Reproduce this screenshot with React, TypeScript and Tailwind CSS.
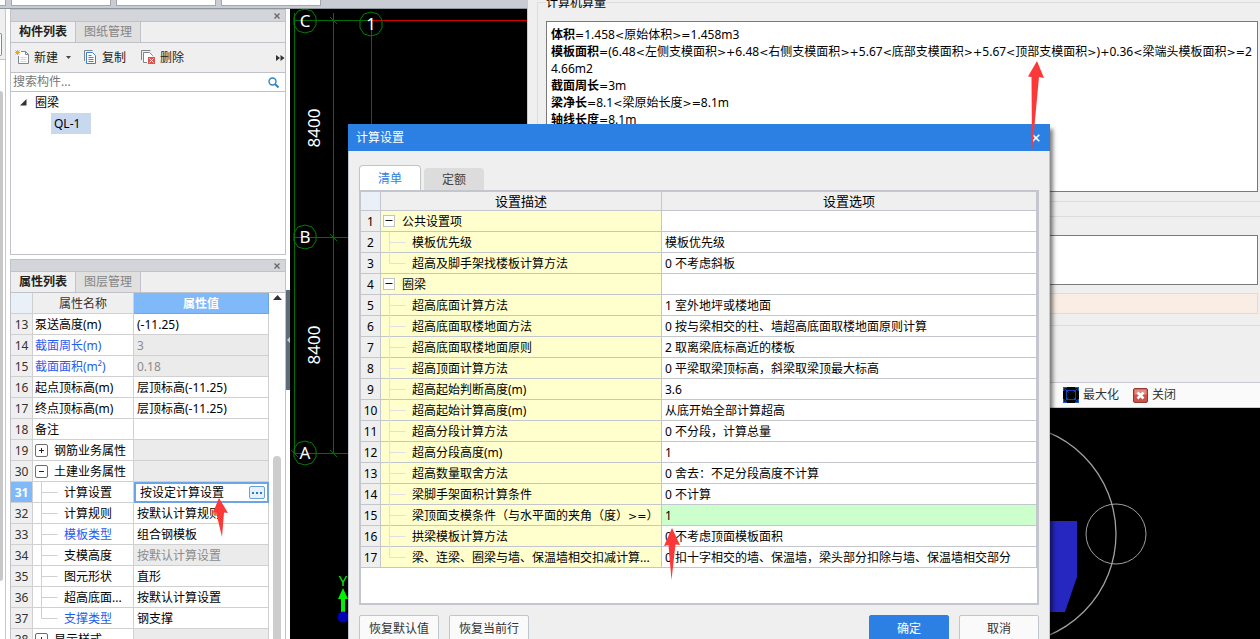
import { useState } from "react";
import type { ReactNode } from "react";
import { clsx } from "clsx";

interface PropertyRow {
  no: number;
  name: string;
  value?: string;
  kind?: "group" | "child";
  open?: boolean;
  blue?: boolean;
  muted?: boolean;
  last?: boolean;
}

const PROPERTIES: PropertyRow[] = [
  { no: 13, name: "泵送高度(m)", value: "(-11.25)" },
  { no: 14, name: "截面周长(m)", value: "3", blue: true, muted: true },
  { no: 15, name: "截面面积(m²)", value: "0.18", blue: true, muted: true },
  { no: 16, name: "起点顶标高(m)", value: "层顶标高(-11.25)" },
  { no: 17, name: "终点顶标高(m)", value: "层顶标高(-11.25)" },
  { no: 18, name: "备注", value: "" },
  { no: 19, name: "钢筋业务属性", kind: "group", muted: true },
  { no: 30, name: "土建业务属性", kind: "group", open: true, muted: true },
  { no: 31, name: "计算设置", value: "按设定计算设置", kind: "child" },
  { no: 32, name: "计算规则", value: "按默认计算规则", kind: "child" },
  { no: 33, name: "模板类型", value: "组合钢模板", kind: "child", blue: true },
  { no: 34, name: "支模高度", value: "按默认计算设置", kind: "child", muted: true },
  { no: 35, name: "图元形状", value: "直形", kind: "child" },
  { no: 36, name: "超高底面...", value: "按默认计算设置", kind: "child" },
  { no: 37, name: "支撑类型", value: "钢支撑", kind: "child", blue: true, last: true },
  { no: 38, name: "显示样式", kind: "group", muted: true },
];

interface SettingRow {
  name: string;
  value?: string;
  group?: boolean;
  last?: boolean;
}

const SETTINGS: SettingRow[] = [
  { name: "公共设置项", group: true },
  { name: "模板优先级", value: "模板优先级" },
  { name: "超高及脚手架找楼板计算方法", value: "0 不考虑斜板", last: true },
  { name: "圈梁", group: true },
  { name: "超高底面计算方法", value: "1 室外地坪或楼地面" },
  { name: "超高底面取楼地面方法", value: "0 按与梁相交的柱、墙超高底面取楼地面原则计算" },
  { name: "超高底面取楼地面原则", value: "2 取离梁底标高近的楼板" },
  { name: "超高顶面计算方法", value: "0 平梁取梁顶标高，斜梁取梁顶最大标高" },
  { name: "超高起始判断高度(m)", value: "3.6" },
  { name: "超高起始计算高度(m)", value: "从底开始全部计算超高" },
  { name: "超高分段计算方法", value: "0 不分段，计算总量" },
  { name: "超高分段高度(m)", value: "1" },
  { name: "超高数量取舍方法", value: "0 舍去：不足分段高度不计算" },
  { name: "梁脚手架面积计算条件", value: "0 不计算" },
  { name: "梁顶面支模条件（与水平面的夹角（度）>=）", value: "1" },
  { name: "拱梁模板计算方法", value: "0 不考虑顶面模板面积" },
  { name: "梁、连梁、圈梁与墙、保温墙相交扣减计算...", value: "0 扣十字相交的墙、保温墙，梁头部分扣除与墙、保温墙相交部分", last: true },
];

const RESULTS: [string, string][] = [
  ["体积", "=1.458<原始体积>=1.458m3"],
  ["模板面积", "=(6.48<左侧支模面积>+6.48<右侧支模面积>+5.67<底部支模面积>+5.67<顶部支模面积>)+0.36<梁端头模板面积>=2"],
  ["", "4.66m2"],
  ["截面周长", "=3m"],
  ["梁净长", "=8.1<梁原始长度>=8.1m"],
  ["轴线长度", "=8.1m"],
];

// operators are set in a wider face than the digits around them
function Formula({ text }: { text: string }) {
  return text.split(/([<>=+]+)/).map((part, i) =>
    i % 2 ? (
      <span key={i} className="font-['DejaVu_Sans',sans-serif] text-[11px] leading-none">
        {part}
      </span>
    ) : (
      part
    )
  );
}

function PanelHeader({ tabs }: { tabs: [string, string] }) {
  const [active, setActive] = useState(0);
  return (
    <>
      <div className="flex h-[12px] shrink-0 items-center justify-end border-t border-[#bfc2c9] bg-[#d3d5da] pr-1">
        <button aria-label="关闭面板" className="text-[#666]">
          <svg width="8" height="8" viewBox="0 0 8 8" stroke="currentColor" strokeWidth="1.3">
            <path d="M1.5 1.5l5 5M6.5 1.5l-5 5" />
          </svg>
        </button>
      </div>
      <div className="flex h-[22px] shrink-0 border-y border-[#bfc2c9] bg-[#efefef]">
        {tabs.map((tab, i) => (
          <button
            key={tab}
            onClick={() => setActive(i)}
            className={clsx(
              "w-[65px] border-r border-[#bfc2c9]",
              active === i ? "font-bold text-[#222]" : "bg-[#e0e0e0] text-[#858585]"
            )}
          >
            {tab}
          </button>
        ))}
      </div>
    </>
  );
}

function NewIcon() {
  return (
    <svg width="15" height="15" viewBox="0 0 15 15" fill="none">
      <path d="M3.5 6v7.500h10v-9l-3-3H6" fill="#fff" stroke="#7d8790" />
      <path d="M10.500 1.500v3h3" stroke="#7d8790" />
      <path d="M5.500 7.500h6M5.500 9.500h6M5.500 11.500h6" stroke="#d2d6da" />
      <path d="M2.500 0v5M0 2.500h5M.5.5l4 4M4.500.5l-4 4" stroke="#f2a227" />
    </svg>
  );
}

function CopyIcon() {
  return (
    <svg width="13" height="15" viewBox="0 0 13 15" fill="none">
      <path d="M.5 11V.5h8" stroke="#7d8790" />
      <path d="M2.500 2.500h6l3 3v8h-9z" fill="#fff" stroke="#3d7fd4" />
      <path d="M4.500 5.500h3M4.500 7.500h5M4.500 9.500h5M4.500 11.500h5" stroke="#3d7fd4" />
    </svg>
  );
}

function DeleteIcon() {
  return (
    <svg width="15" height="15" viewBox="0 0 15 15" fill="none">
      <path d="M.5 10V.5h9" stroke="#7d8790" />
      <path d="M6 12.500H2.500v-10h6l3 3V6" fill="#fff" stroke="#7d8790" />
      <path d="M7 7h7v7H7z" fill="#d9534f" />
      <path d="M8.500 8.500l4 4M12.500 8.500l-4 4" stroke="#fff" />
    </svg>
  );
}

function ToggleBox({ open }: { open?: boolean }) {
  return (
    <svg width="13" height="13" viewBox="0 0 13 13" fill="none" className="shrink-0">
      <rect x=".5" y=".5" width="12" height="12" rx="1.500" fill="#fff" stroke="#6c6c6c" />
      <path d={open ? "M4 6.500h5" : "M4 6.500h5M6.500 4v5"} stroke="#222" />
    </svg>
  );
}

// connector between a tree branch and its leaf
function Branch({ color, last }: { color: string; last?: boolean }) {
  return (
    <svg width="17" height="21" viewBox="0 0 17 21" fill="none" stroke={color} className="shrink-0">
      <path d={last ? "M.5 0v10.500h16" : "M.5 0v21M.5 10.500h16"} />
    </svg>
  );
}

function ComponentPanel() {
  return (
    <section className="flex h-[246px] shrink-0 flex-col border-x border-b border-[#bfc2c9] bg-white">
      <PanelHeader tabs={["构件列表", "图纸管理"]} />
      <div className="flex h-[30px] shrink-0 items-center border-b border-[#bfc2c9] bg-[#efefef] pl-1 text-[#222]">
        <button className="flex items-center gap-1">
          <NewIcon />
          新建
          <svg width="5" height="3" viewBox="0 0 5 3" className="ml-1">
            <path d="M0 0h5L2.500 3z" fill="#444" />
          </svg>
        </button>
        <button className="ml-[13px] flex items-center gap-[5px]">
          <CopyIcon />
          复制
        </button>
        <button className="ml-[15px] flex items-center gap-1">
          <DeleteIcon />
          删除
        </button>
        <button aria-label="更多" className="ml-auto">
          <svg width="9" height="6" viewBox="0 0 9 6" fill="#333">
            <path d="M0 0l4 3-4 3zM4.500 0l4 3-4 3z" />
          </svg>
        </button>
      </div>
      <div className="flex h-[19px] shrink-0 items-center border-b border-[#bfc2c9] pr-[6px]">
        <input
          aria-label="搜索构件"
          placeholder="搜索构件..."
          className="min-w-0 flex-1 px-[2px] outline-none placeholder:text-[#777]"
        />
        <svg width="11" height="11" viewBox="0 0 11 11" fill="none" stroke="#2a86c8" strokeWidth="1.400">
          <circle cx="4.500" cy="4.500" r="3.500" />
          <path d="M7 7l3.500 3.500" strokeWidth="2" />
        </svg>
      </div>
      <ul>
        <li>
          <div className="flex h-[21px] items-center gap-2 pl-[9px]">
            <svg width="7" height="7" viewBox="0 0 7 7">
              <path d="M6.500 0v6.500H0z" fill="#333" />
            </svg>
            圈梁
          </div>
          <ul className="pl-10">
            <li className="flex h-[21px] w-10 items-center bg-[#c8d8ee] pl-[3px]">QL-1</li>
          </ul>
        </li>
      </ul>
    </section>
  );
}

function PropertyPanel() {
  const [selected, setSelected] = useState(31);
  return (
    <section className="mt-[4px] flex min-h-0 flex-1 flex-col border-x border-[#bfc2c9] bg-white">
      <PanelHeader tabs={["属性列表", "图层管理"]} />
      <div className="flex min-h-0 flex-1 overflow-hidden">
        <div className="min-w-0 flex-1">
          <table className="w-full table-fixed border-separate border-spacing-0">
            <colgroup>
              <col className="w-[22px]" />
              <col className="w-[101px]" />
              <col />
            </colgroup>
            <thead>
              <tr className="h-[21px]">
                <th className="border-r border-b border-[#d0d0d0] bg-[#eaf0f7] p-0" />
                <th className="border-r border-b border-[#d0d0d0] bg-[#efefef] p-0 pt-[2px] font-normal text-[#333]">属性名称</th>
                <th className="border-r border-b border-[#6ba5e8] bg-[#80b9fa] p-0 pt-[2px] text-white">属性值</th>
              </tr>
            </thead>
            <tbody>
              {PROPERTIES.map((row) => {
                const active = selected === row.no;
                return (
                  <tr key={row.no} onClick={() => setSelected(row.no)} className="h-[21px]">
                    <td
                      className={clsx(
                        "border-r border-b border-[#d0d0d0] p-0 pt-[2px] text-center",
                        active ? "bg-[#80b9fa] font-bold text-white" : "bg-[#efefef] text-[#333]"
                      )}
                    >
                      {row.no}
                    </td>
                    <td className={clsx("overflow-hidden border-r border-b border-[#d0d0d0] p-0", row.blue && "text-[#1f5cf0]")}>
                      <div className="flex h-5 items-center pl-[2px] whitespace-nowrap">
                        {row.kind === "group" && (
                          <span className="mr-[6px]">
                            <ToggleBox open={row.open} />
                          </span>
                        )}
                        {row.kind === "child" && (
                          <span className="mr-[6px] ml-[6px]">
                            <Branch color="#d0d0d0" last={row.last} />
                          </span>
                        )}
                        <span className="pt-[2px]">{row.name}</span>
                      </div>
                    </td>
                    <td
                      className={clsx(
                        "p-0",
                        row.muted && "bg-[#ebebeb] text-[#8c8c8c]",
                        active ? "border-2 border-[#6ba5e8]" : "border-r border-b border-[#d0d0d0] pt-[2px] pl-[3px]"
                      )}
                    >
                      {active ? (
                        <div className="flex h-[17px] items-center pr-[2px] pl-1">
                          <input aria-label={row.name} defaultValue={row.value} className="min-w-0 flex-1 outline-none" />
                          <button aria-label="编辑" className="flex h-[13px] w-4 items-center justify-center rounded-xs border border-[#6aa0d8] bg-[#e6f1fc]">
                            <svg width="10" height="2" viewBox="0 0 10 2" fill="#2f76c4">
                              <path d="M0 0h2v2H0zM4 0h2v2H4zM8 0h2v2H8z" />
                            </svg>
                          </button>
                        </div>
                      ) : (
                        row.value
                      )}
                    </td>
                  </tr>
                );
              })}
            </tbody>
          </table>
        </div>
        <div className="flex w-4 shrink-0 flex-col items-center pt-[2px]">
          <svg width="9" height="5" viewBox="0 0 9 5">
            <path d="M0 5h9L4.500 0z" fill="#333" />
          </svg>
          <div className="mt-[156px] w-2 flex-1 rounded-t-full bg-[#cdcdcd]" />
        </div>
      </div>
    </section>
  );
}

function AxisBubble({ x, y, label }: { x: number; y: number; label: string }) {
  return (
    <g>
      <path
        d="M0-12L7-10L11-4L11 4L7 10L0 12L-7 10L-11 4L-11-4L-7-10Z"
        transform={`translate(${x} ${y})`}
        stroke="#008000"
        fill="none"
      />
      <text x={x} y={y + 6} fill="#fff" fontSize="17" textAnchor="middle">
        {label}
      </text>
    </g>
  );
}

function Drawing() {
  return (
    <svg className="min-w-0 flex-1 bg-black" fill="none">
      <g stroke="#006e00">
        <path d="M4.500 4v440M43.500 4v440M4 11.500h77M4 228.500h300M4 444.500h300" />
        <path d="M40 8l7 7M40 225l7 7M40 441l7 7M1 441l7 7" />
      </g>
      <path d="M81.500 11v400M81 11.500h600" stroke="#d00000" />
      <AxisBubble x={15} y={12} label="C" />
      <AxisBubble x={81} y={15} label="1" />
      <AxisBubble x={15} y={228} label="B" />
      <AxisBubble x={15} y={444} label="A" />
      <g fill="#fff" fontSize="17" textAnchor="middle">
        <text transform="translate(30 119) rotate(-90)">8400</text>
        <text transform="translate(30 336) rotate(-90)">8400</text>
      </g>
      <path d="M51 590v14h4v-14h3l-5-11-5 11z" fill="#00f000" />
      <text x="53" y="577" fill="#00f000" fontSize="15" textAnchor="middle">
        Y
      </text>
      <circle cx="53" cy="608" r="5.500" fill="#0000b4" />
    </svg>
  );
}

function ResultWindow() {
  return (
    <main className="flex min-w-0 flex-1 flex-col border-l border-[#c8cbd2] bg-[#efefef]">
      <fieldset className="-mt-[6px] ml-[9px] h-[208px] shrink-0 border border-r-0 border-[#dcdcdc] pr-[2px] pl-2">
        <legend className="h-[17px] leading-[17px]">计算机算量</legend>
        <div className="mt-[10px] h-[171px] overflow-hidden border border-[#7a7a7a] bg-white px-1 pt-1 leading-[17px] whitespace-nowrap">
          {RESULTS.map(([label, text]) => (
            <p key={text} className="h-[17px]">
              <b>{label}</b>
              <Formula text={text} />
            </p>
          ))}
        </div>
      </fieldset>
      <section className="mt-[14px] ml-[9px] flex h-[110px] shrink-0 flex-col border-y border-l border-[#dcdcdc] pt-[18px] pr-[2px] pl-2">
        <textarea aria-label="手算量" className="h-[50px] resize-none border border-[#7a7a7a] bg-white" />
        <div className="mt-2 h-[21px] border border-[#dcdcdc] bg-[#faeee4]" />
      </section>
      <div className="mt-[56px] flex h-[26px] shrink-0 items-center justify-end gap-[14px] border-y border-[#c8cbd2] bg-[#fafafa] pr-[84px] text-[#333]">
        <button className="flex items-center gap-1">
          <svg width="16" height="16" viewBox="0 0 16 16" fill="none" stroke="#1458d8">
            <rect width="16" height="16" fill="#000" stroke="none" />
            <path d="M.5 4V.5H4M12 .5h3.500V4M15.500 12v3.500H12M4 15.500H.5V12" strokeWidth="1.600" />
            <path d="M3.500 3.500h9v9h-9z" strokeWidth=".8" />
            <path d="M2 2l3.500 3.500M14 2l-3.500 3.500M2 14l3.500-3.500M14 14l-3.500-3.500" strokeWidth=".8" />
          </svg>
          最大化
        </button>
        <button className="flex items-center gap-1">
          <svg width="15" height="15" viewBox="0 0 15 15" fill="none">
            <rect x=".5" y=".5" width="14" height="14" rx="1.500" fill="#cf5148" stroke="#8d3a35" />
            <path d="M1.500 1.500h12v5h-12z" fill="#e58a80" />
            <path d="M4.500 4.500l6 6M10.500 4.500l-6 6" stroke="#fff" strokeWidth="2.600" />
          </svg>
          关闭
        </button>
      </div>
      <svg className="min-h-0 w-full flex-1 bg-black" fill="none" stroke="#a0a0a0">
        <path d="M500 113h49v56l-12 35h-37z" fill="#2626c0" stroke="none" />
        <circle cx="478" cy="126" r="110" strokeWidth="1.300" />
        <circle cx="588" cy="126" r="30" />
      </svg>
    </main>
  );
}

function DialogButton({ primary, children }: { primary?: boolean; children: ReactNode }) {
  return (
    <button
      className={clsx(
        "h-[27px] w-20 rounded-xs border",
        primary ? "border-[#2d80e3] bg-[#2d80e3] text-white" : "border-[#c0c5d0] bg-[#fafafa] text-[#333]"
      )}
    >
      {children}
    </button>
  );
}

function SettingsDialog() {
  const [tab, setTab] = useState(0);
  const [selected, setSelected] = useState(14);
  return (
    <div
      role="dialog"
      aria-label="计算设置"
      className="absolute top-[124px] right-[210px] left-[348px] bg-[#efefef] pb-8 shadow-[3px_5px_4px_rgba(0,0,0,0.5)]"
    >
      <div className="flex h-[27px] items-center justify-between bg-[#2d80e3] pr-[10px] pl-2 text-white">
        计算设置
        <button aria-label="关闭">
          <svg width="8" height="8" viewBox="0 0 8 8" stroke="#fff" strokeWidth="1.600">
            <path d="M.7.7l6.600 6.600M7.300.7L.7 7.300" />
          </svg>
        </button>
      </div>
      <div className="border-x border-[#c0c5d0] px-[10px] pt-[14px]">
        <div className="flex items-end gap-[3px]">
          {["清单", "定额"].map((name, i) => (
            <button
              key={name}
              onClick={() => setTab(i)}
              className={clsx(
                "rounded-t-sm pt-[2px]",
                tab === i
                  ? "h-[25px] w-[62px] border border-b-0 border-[#c0c5cc] bg-white text-[#2d80e3]"
                  : "h-[22px] w-[60px] bg-[#dcdcdc] text-[#444]"
              )}
            >
              {name}
            </button>
          ))}
        </div>
        <div className="h-[415px] border-2 border-[#c3c6cc] bg-white">
          <table className="w-full table-fixed border-separate border-spacing-0">
            <colgroup>
              <col className="w-5" />
              <col className="w-[281px]" />
              <col />
            </colgroup>
            <thead>
              <tr className="h-[19px] text-[13px] leading-[17px]">
                <th className="border-r border-b border-[#c3c6cc] bg-[#eaf0f7] p-0" />
                <th className="border-r border-b border-[#c3c6cc] bg-[#efefef] p-0 font-normal">设置描述</th>
                <th className="border-r border-b border-[#c3c6cc] bg-[#efefef] p-0 font-normal">设置选项</th>
              </tr>
            </thead>
            <tbody>
              {SETTINGS.map((row, i) => (
                <tr key={row.name} onClick={() => setSelected(i)} className="h-[21px]">
                  <td className="border-r border-b border-[#c3c6cc] bg-[#efefef] p-0 pt-[2px] text-center">{i + 1}</td>
                  <td className="border-r border-b border-[#c3c6cc] bg-[#ffffce] p-0">
                    <div className={clsx("flex h-5 items-center whitespace-nowrap", row.group ? "gap-[7px] pl-[2px]" : "gap-[6px] pl-2")}>
                      {row.group ? (
                        <svg width="12" height="12" viewBox="0 0 12 12" fill="none" className="shrink-0">
                          <rect x=".5" y=".5" width="11" height="11" fill="#fff" stroke="#c0c3c9" />
                          <path d="M2.500 5.500h7" stroke="#111" />
                        </svg>
                      ) : (
                        <Branch color="#e0e0e0" last={row.last} />
                      )}
                      <span className="pt-[2px]">
                        <Formula text={row.name} />
                      </span>
                    </div>
                  </td>
                  <td
                    className={clsx(
                      "border-r border-b border-[#c3c6cc] pt-[2px] pr-0 pb-0 pl-[3px] whitespace-nowrap",
                      selected === i && "bg-[#ccffcc]"
                    )}
                  >
                    {row.value}
                  </td>
                </tr>
              ))}
            </tbody>
          </table>
        </div>
        <div className="mt-[10px] flex gap-[10px]">
          <DialogButton>恢复默认值</DialogButton>
          <DialogButton>恢复当前行</DialogButton>
          <span className="flex-1" />
          <DialogButton primary>确定</DialogButton>
          <DialogButton>取消</DialogButton>
        </div>
      </div>
    </div>
  );
}

export default function App() {
  return (
    <div className="relative flex h-screen overflow-hidden bg-white font-['Noto_Sans','Noto_Sans_CJK_SC',sans-serif] text-xs text-black">
      <div className="flex w-[527px] shrink-0 flex-col">
        <div className="flex h-[9px] shrink-0 gap-[5px] border-b border-[#8f959e] bg-[#c9ccd2] pb-[2px]">
          <span className="w-[6px] border-r border-b border-[#a4a7ac] bg-white" />
          <span className="w-[100px] border-x border-b border-[#a4a7ac] bg-white" />
          <span className="w-[100px] border-x border-b border-[#a4a7ac] bg-white" />
          <span className="w-[100px] border-x border-b border-[#a4a7ac] bg-white" />
        </div>
        <div className="flex min-h-0 flex-1">
          <div className="flex w-[6px] shrink-0 flex-col border-r border-[#c4c6ca]">
            <div className="h-[51px] border-b border-[#c4c6ca] bg-[#efefef] pt-6">
              <div className="h-[23px] w-[2px] rounded-r-sm border-y border-r border-[#4c96e0] bg-white" />
            </div>
            <div className="mt-[31px] h-[490px] w-[3px] rounded-r-full bg-[#c8c8c8]" />
          </div>
          <div className="ml-1 flex w-[276px] shrink-0 flex-col">
            <ComponentPanel />
            <PropertyPanel />
          </div>
          <div className="w-1 shrink-0 pt-[281px]">
            <div className="flex h-[100px] items-center justify-end bg-[#5e6b78]">
              <svg width="3" height="6" viewBox="0 0 3 6">
                <path d="M3 0v6L0 3z" fill="#c8cdd2" />
              </svg>
            </div>
          </div>
          <Drawing />
        </div>
      </div>
      <ResultWindow />
      <SettingsDialog />
      <svg className="pointer-events-none absolute inset-0 h-full w-full" fill="#fd3838">
        <path d="M1037 61l7 17-5-1-7 75-.5-75-3.500-.5z" />
        <path d="M672 528l8 17-4.500-.5-4 35.500-3-35-4.500 1z" />
        <path d="M219 498l9 15-4-.5-2 24.500-6-25-3 .5z" />
      </svg>
    </div>
  );
}
